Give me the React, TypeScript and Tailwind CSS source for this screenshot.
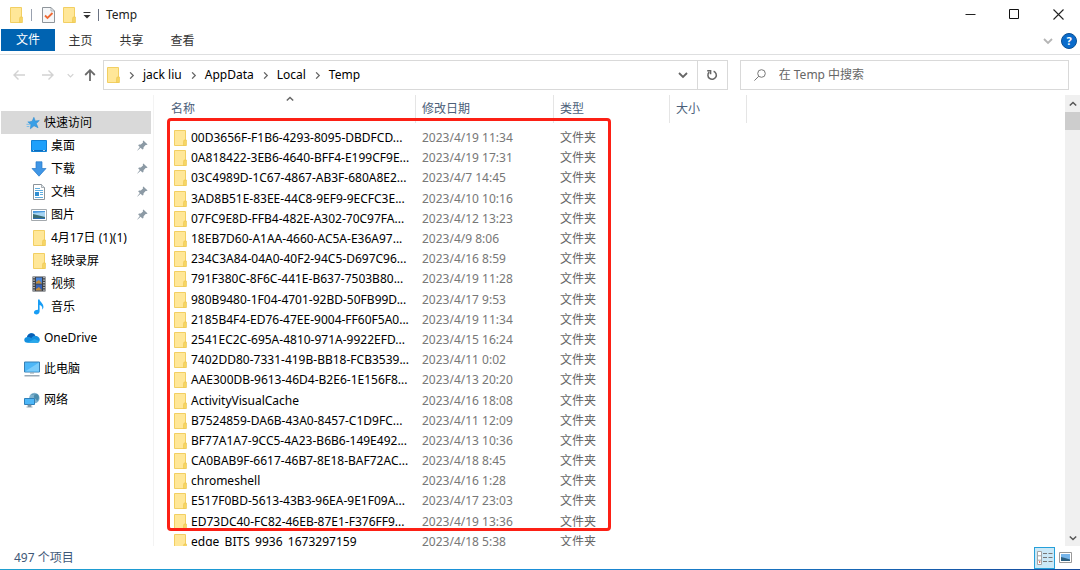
import React from 'react'

const files = [
  { name: '00D3656F-F1B6-4293-8095-DBDFCD...', date: '2023/4/19 11:34' },
  { name: '0A818422-3EB6-4640-BFF4-E199CF9E...', date: '2023/4/19 17:31' },
  { name: '03C4989D-1C67-4867-AB3F-680A8E2...', date: '2023/4/7 14:45' },
  { name: '3AD8B51E-83EE-44C8-9EF9-9ECFC3E...', date: '2023/4/10 10:16' },
  { name: '07FC9E8D-FFB4-482E-A302-70C97FA...', date: '2023/4/12 13:23' },
  { name: '18EB7D60-A1AA-4660-AC5A-E36A97...', date: '2023/4/9 8:06' },
  { name: '234C3A84-04A0-40F2-94C5-D697C96...', date: '2023/4/16 8:59' },
  { name: '791F380C-8F6C-441E-B637-7503B80...', date: '2023/4/19 11:28' },
  { name: '980B9480-1F04-4701-92BD-50FB99D...', date: '2023/4/17 9:53' },
  { name: '2185B4F4-ED76-47EE-9004-FF60F5A0...', date: '2023/4/19 11:34' },
  { name: '2541EC2C-695A-4810-971A-9922EFD...', date: '2023/4/15 16:24' },
  { name: '7402DD80-7331-419B-BB18-FCB3539...', date: '2023/4/11 0:02' },
  { name: 'AAE300DB-9613-46D4-B2E6-1E156F8...', date: '2023/4/13 20:20' },
  { name: 'ActivityVisualCache', date: '2023/4/16 18:08' },
  { name: 'B7524859-DA6B-43A0-8457-C1D9FC...', date: '2023/4/11 12:09' },
  { name: 'BF77A1A7-9CC5-4A23-B6B6-149E492...', date: '2023/4/13 10:36' },
  { name: 'CA0BAB9F-6617-46B7-8E18-BAF72AC...', date: '2023/4/18 8:45' },
  { name: 'chromeshell', date: '2023/4/16 1:28' },
  { name: 'E517F0BD-5613-43B3-96EA-9E1F09A...', date: '2023/4/17 23:03' },
  { name: 'ED73DC40-FC82-46EB-87E1-F376FF9...', date: '2023/4/19 13:36' },
  { name: 'edge_BITS_9936_1673297159', date: '2023/4/18 5:38' },
]

const FolderIcon = () => (
  <svg className="w-[13px] h-4 shrink-0" viewBox="0 0 13 16">
    <path d="M0.5 0.5H11.5V15.5H0.5Z" fill="#ffe798" stroke="#f2cf62" />
    <path d="M10 10H12.5V15.5H9.5V12Z" fill="#f7d564" stroke="#edc64f" strokeWidth="0.6" />
  </svg>
)

const StarIcon = () => (
  <svg className="w-[14px] h-[14px]" viewBox="0 0 16 16">
    <path d="M9 1.5L10.6 5.6L15.2 5.2L11.8 8.6L13.8 13.4L9.2 11.2L5 14.6L5.6 9.8L2.4 7L7 6Z" fill="#3a9fe6" stroke="#2386cf" strokeWidth="0.6" />
    <path d="M0.5 9.5H4.5M0.8 12H3.8M3.5 6.6H1.8" stroke="#64b5ec" strokeWidth="0.9" />
  </svg>
)

const DesktopIcon = () => (
  <svg className="w-4 h-4" viewBox="0 0 16 16">
    <path d="M0.5 2.5H15.5V13.5H0.5Z" fill="#1ea0fb" stroke="#1180d4" />
    <path d="M1 12H15V13H1Z" fill="#0b6cbc" />
    <path d="M2 12.5H3M12 12.5H14" stroke="#fff" strokeWidth="0.7" />
  </svg>
)

const DownloadIcon = () => (
  <svg className="w-4 h-4" viewBox="0 0 16 16">
    <path d="M5 0.8H11V7.5H15L8 15.2L1 7.5H5Z" fill="#3f96e6" stroke="#2678c7" strokeWidth="0.7" />
  </svg>
)

const DocumentIcon = () => (
  <svg className="w-4 h-4" viewBox="0 0 16 16">
    <path d="M2.5 0.5H10.5L13.5 3.5V15.5H2.5Z" fill="#fff" stroke="#8b949b" />
    <path d="M10.5 0.5V3.5H13.5" fill="#dfe5e9" stroke="#8b949b" strokeWidth="0.7" />
    <path d="M4 4.5H9M4 6.5H12M9 8.5H12M9 10.5H12M4 13.5H12" stroke="#5faee0" />
    <path d="M4 8H8V12H4Z" fill="#2f8dd0" />
  </svg>
)

const PictureIcon = () => (
  <svg className="w-4 h-4" viewBox="0 0 16 16">
    <path d="M0.5 2.5H15.5V13.5H0.5Z" fill="#fff" stroke="#a4a9ad" />
    <path d="M2 4H14V12H2Z" fill="#a5d3f2" />
    <path d="M2 7L6 8L14 10V12H2Z" fill="#3b6d73" />
    <path d="M2 4H14V5L8 5.5L2 6Z" fill="#4a98de" />
    <path d="M2 11H14V12H2Z" fill="#2c6cb0" />
  </svg>
)

const VideoIcon = () => (
  <svg className="w-4 h-4" viewBox="0 0 16 16">
    <path d="M1.5 0.5H14.5V15.5H1.5Z" fill="#3d4146" />
    <path d="M3 1V15M13 1V15" stroke="#d9dde0" strokeWidth="1.4" strokeDasharray="1.3 1.2" />
    <path d="M5 1.5H11V7.5H5Z" fill="#4c86d9" />
    <path d="M5 8.5H11V14.5H5Z" fill="#3763b8" />
    <path d="M5 6L8 4L11 7.5H5ZM5 13L8 11L11 14.5H5Z" fill="#c08a3a" />
  </svg>
)

const MusicIcon = () => (
  <svg className="w-4 h-4" viewBox="0 0 16 16">
    <path d="M7 0.5H8.6C8.8 3 13 4.5 12.4 8.6C12.2 9.8 11.6 10.3 11.2 10.6C11.8 8 10.4 6.6 8.6 6V12.5C8.4 15 5.6 16 3.8 15C2 13.8 3.2 10.6 7 10.8Z" fill="#189df5" />
  </svg>
)

const CloudIcon = () => (
  <svg className="w-4 h-4" viewBox="0 0 16 16">
    <path d="M3.4 12.8C-0.6 12.6-0.8 7.6 3 7C3.8 3 9.4 1.8 11.2 5.8C14.6 6 16 8.4 15.8 10C15.6 12 14 12.8 13 12.8Z" fill="#1490df" />
    <path d="M3 7C3.8 3 9.4 1.8 11.2 5.8C9 5.8 8 6.8 7.4 8.2C6 7 4.4 6.8 3 7Z" fill="#0a5fb4" />
    <path d="M3.4 12.8L10.5 9L15.4 11.3C14.9 12.4 14 12.8 13 12.8Z" fill="#28a8ea" />
  </svg>
)

const ComputerIcon = () => (
  <svg className="w-4 h-4" viewBox="0 0 16 16">
    <path d="M0.5 1H15.5V11H0.5Z" fill="#4db7f8" stroke="#3680b5" />
    <path d="M1 10.5L15 1.5V10.5Z" fill="#7accfb" />
    <path d="M6 11.5H10V12.5H6Z" fill="#8fa0ab" />
    <path d="M0.5 14.8H15.5" stroke="#8495a3" strokeWidth="1.2" />
  </svg>
)

const NetworkIcon = () => (
  <svg className="w-4 h-4" viewBox="0 0 16 16">
    <circle cx="10.4" cy="6" r="5.2" fill="#7fb2ce" />
    <path d="M7 3C9 1 11 2 10 4C9 6 12 6 13 9C15 8 16 4 13 2" fill="#4a8bab" />
    <path d="M0.5 6.5H10.5V12.5H0.5Z" fill="#4db7f8" stroke="#2e80ba" />
    <path d="M4 13H7V14.5H4ZM2.5 15H8.5" fill="#7f95a3" stroke="#7f95a3" strokeWidth="0.8" />
  </svg>
)

const PinIcon = () => (
  <svg className="w-[11px] h-[11px]" viewBox="0 0 11 11">
    <path d="M6.4 0.4L10.6 4.4L9.4 5L8.6 4.9L6.6 7.2L6.4 9L5.4 9.6L3.6 7.8L0.6 10.6L0.2 10.4L2.8 7L1.2 5.4L2 4.4L3.8 4.4L6 2.4L5.8 1.2Z" fill="#8c9aa5" />
  </svg>
)

interface ChevronProps {
  className: string
  d?: string
}

const Chevron: React.FC<ChevronProps> = ({ className, d = 'M1 3L5 7L9 3' }) => (
  <svg className={`shrink-0 ${className}`} viewBox="0 0 10 10" fill="none" stroke="currentColor" strokeWidth="1.8">
    <path d={d} />
  </svg>
)

const quickLinks = [
  { label: '桌面', Icon: DesktopIcon, pinned: true },
  { label: '下载', Icon: DownloadIcon, pinned: true },
  { label: '文档', Icon: DocumentIcon, pinned: true },
  { label: '图片', Icon: PictureIcon, pinned: true },
  { label: '4月17日 (1)(1)', Icon: FolderIcon, pinned: false },
  { label: '轻映录屏', Icon: FolderIcon, pinned: false },
  { label: '视频', Icon: VideoIcon, pinned: false },
  { label: '音乐', Icon: MusicIcon, pinned: false },
]

const places = [
  { label: 'OneDrive', Icon: CloudIcon },
  { label: '此电脑', Icon: ComputerIcon },
  { label: '网络', Icon: NetworkIcon },
]

const TitleBar = () => (
  <header className="flex h-[29px] items-center justify-between pl-[10px]">
    <div className="flex items-center">
      <FolderIcon />
      <span className="ml-2 h-3 w-px bg-gray-400" />
      <button aria-label="属性" className="ml-[10px]">
        <svg className="w-[13px] h-4" viewBox="0 0 13 16">
          <path d="M0.5 0.5H9L12.5 4V15.5H0.5Z" fill="#f5f7f9" stroke="#8f959b" />
          <path d="M9 0.5V4H12.5" fill="none" stroke="#8f959b" strokeWidth="0.7" />
          <path d="M3 8.5L5.5 11L10.5 6" fill="none" stroke="#ee6a35" strokeWidth="1.8" />
        </svg>
      </button>
      <button aria-label="新建文件夹" className="ml-2">
        <FolderIcon />
      </button>
      <button aria-label="自定义快速访问工具栏" className="ml-[7px]">
        <svg className="w-2 h-2" viewBox="0 0 8 8">
          <path d="M0.5 1.5H7.5" stroke="#333" />
          <path d="M0.5 4H7.5L4 7.5Z" fill="#333" />
        </svg>
      </button>
      <span className="ml-[7px] h-3 w-px bg-gray-500" />
      <h1 className="ml-[7px]">Temp</h1>
    </div>
    <div className="flex h-full pb-px">
      <button aria-label="最小化" className="flex w-11 items-center justify-center">
        <svg className="w-[11px] h-[11px]" viewBox="0 0 11 11"><path d="M0.5 5.5H10.5" stroke="#222" /></svg>
      </button>
      <button aria-label="最大化" className="flex w-11 items-center justify-center">
        <svg className="w-[11px] h-[11px]" viewBox="0 0 11 11"><path d="M0.5 0.5H9.5V9.5H0.5Z" fill="none" stroke="#111" /></svg>
      </button>
      <button aria-label="关闭" className="flex w-11 items-center justify-center">
        <svg className="w-[11px] h-[11px]" viewBox="0 0 11 11"><path d="M0.5 0.5L10.5 10.5M10.5 0.5L0.5 10.5" stroke="#222" strokeWidth="1.1" /></svg>
      </button>
    </div>
  </header>
)

const Ribbon = () => (
  <nav className="flex h-[26px] items-start justify-between border-b border-[#dedfe0] pl-px pr-[3px]">
    <div className="flex text-[#333]">
      <button className="h-[22px] w-[54px] bg-[#0063b1] text-white">文件</button>
      <button className="h-6 w-[51px]">主页</button>
      <button className="h-6 w-[51px]">共享</button>
      <button className="h-6 w-[51px]">查看</button>
    </div>
    <div className="flex h-6 items-center gap-2">
      <button aria-label="展开功能区" className="text-[#b5b5b5]"><Chevron className="w-[10px] h-[10px]" /></button>
      <button aria-label="帮助" className="flex h-4 w-4 items-center justify-center rounded-full border border-[#0a4f93] bg-[#0a6bcb] text-[11px] font-bold text-white">?</button>
    </div>
  </nav>
)

const AddressBar = () => (
  <div className="flex h-10 items-center pl-[13px] pr-[11px]">
    <button aria-label="后退" className="text-[#d2d2d2]">
      <svg className="w-3 h-3" viewBox="0 0 12 12" fill="none" stroke="currentColor" strokeWidth="1.4"><path d="M12 6H1M5.5 1.5L1 6L5.5 10.5" /></svg>
    </button>
    <button aria-label="前进" className="ml-[17px] text-[#d2d2d2]">
      <svg className="w-3 h-3" viewBox="0 0 12 12" fill="none" stroke="currentColor" strokeWidth="1.4"><path d="M0 6H11M6.5 1.5L11 6L6.5 10.5" /></svg>
    </button>
    <button aria-label="最近浏览的位置" className="ml-[13px] text-[#d2d2d2]"><Chevron className="w-[7px] h-[7px]" /></button>
    <button aria-label="向上" className="ml-[10px] text-[#6b6b6b]">
      <svg className="w-3 h-3" viewBox="0 0 12 12" fill="none" stroke="currentColor" strokeWidth="1.8"><path d="M6 12V1.5M1.2 6L6 1.2L10.8 6" /></svg>
    </button>
    <div className="ml-[7px] flex h-[30px] flex-[619] items-center border border-[#d9d9d9] pl-[3px]">
      <FolderIcon />
      {['jack liu', 'AppData', 'Local', 'Temp'].map((part) => (
        <React.Fragment key={part}>
          <Chevron className="mx-2 w-[7px] h-[7px] text-[#666]" d="M3 0.5L7.5 5L3 9.5" />
          <a href="#" className="text-black">{part}</a>
        </React.Fragment>
      ))}
      <button aria-label="以前的位置" className="ml-auto mr-[9px] text-[#666]"><Chevron className="w-[10px] h-[10px]" /></button>
      <button aria-label="刷新" className="flex h-full w-[30px] items-center justify-center border-l border-[#d9d9d9] text-[#666]">
        <svg className="w-3 h-3" viewBox="0 0 12 12" fill="none" stroke="currentColor" strokeWidth="1.5">
          <path d="M7.6 2.2A4.2 4.2 0 1 1 3.2 3.1M1.2 1.8H4.6V5.2" />
        </svg>
      </button>
    </div>
    <label className="ml-3 flex h-[30px] flex-[314] items-center border border-[#d9d9d9] pl-[13px]">
      <svg className="w-3 h-3 shrink-0" viewBox="0 0 12 12" fill="none" stroke="#777"><circle cx="7.5" cy="4.5" r="3.8" /><path d="M4.8 7.2L0.4 11.6" /></svg>
      <input aria-label="搜索" placeholder="在 Temp 中搜索" className="ml-[13px] w-full min-w-0 outline-none placeholder:text-[#666]" />
    </label>
  </div>
)

const Sidebar = () => (
  <aside className="w-[154px] shrink-0 border-r border-[#f3f3f3] pt-4 text-black">
    <a href="#" className="ml-px mr-[2px] flex h-[23px] items-center bg-[#d9d9d9] pl-[25px]">
      <StarIcon />
      <span className="ml-1">快速访问</span>
    </a>
    <ul>
      {quickLinks.map(({ label, Icon, pinned }) => (
        <li key={label}>
          <a href="#" className="flex h-[23px] items-center pl-[31px] pr-[5px]">
            <span className="flex w-4 justify-center"><Icon /></span>
            <span className="ml-1 flex-1">{label}</span>
            {pinned && <PinIcon />}
          </a>
        </li>
      ))}
    </ul>
    <ul className="pt-1">
      {places.map(({ label, Icon }) => (
        <li key={label}>
          <a href="#" className="flex h-[31px] items-center pl-6">
            <Icon />
            <span className="ml-1">{label}</span>
          </a>
        </li>
      ))}
    </ul>
  </aside>
)

const FileTable = () => (
  <div className="relative h-[451px] min-w-0 flex-1 overflow-hidden pl-[14px]">
    <table className="h-[457px] table-fixed text-left">
      <thead>
        <tr className="h-[33px] align-top text-[#4c607a]">
          <th className="w-[248px] p-0 font-normal">
            <div className="relative flex h-7 items-center border-r border-[#e5e5e5] pl-[3px]">
              名称
              <Chevron className="absolute left-[118px] top-0 w-2 h-2 text-[#666]" d="M1 7L5 3L9 7" />
            </div>
          </th>
          <th className="w-[138px] p-0 font-normal"><div className="flex h-7 items-center border-r border-[#e5e5e5] pl-[6px]">修改日期</div></th>
          <th className="w-[116px] p-0 font-normal"><div className="flex h-7 items-center border-r border-[#e5e5e5] pl-[6px]">类型</div></th>
          <th className="w-[77px] p-0 font-normal"><div className="flex h-7 items-center border-r border-[#e5e5e5] pl-[6px]">大小</div></th>
        </tr>
      </thead>
      <tbody>
        {files.map((file) => (
          <tr key={file.name}>
            <td className="p-0 text-black">
              <div className="flex items-center whitespace-nowrap pl-[6px]">
                <FolderIcon />
                <span className="ml-1">{file.name}</span>
              </div>
            </td>
            <td className="p-0 pl-[6px] text-[#777]">{file.date}</td>
            <td className="p-0 pl-[6px] text-[#666]">文件夹</td>
            <td className="p-0" />
          </tr>
        ))}
      </tbody>
    </table>
    <div className="pointer-events-none absolute left-[13px] top-[23px] h-[413px] w-[444px] rounded-sm border-3 border-[#fc2015]" />
  </div>
)

const Scrollbar = () => (
  <div className="flex w-[15px] shrink-0 flex-col items-center bg-[#f0f0f0] text-[#555]">
    <button aria-label="向上滚动" className="flex h-[17px] items-center"><Chevron className="w-2 h-2" d="M1 7L5 3L9 7" /></button>
    <div className="h-[18px] w-full bg-[#cdcdcd]" />
    <button aria-label="向下滚动" className="mt-auto flex h-4 items-center"><Chevron className="w-2 h-2" /></button>
  </div>
)

const StatusBar = () => (
  <footer>
    <div className="flex h-[23px] items-center justify-between pl-[14px] pr-2 text-[#3e5878]">
      <span>497 个项目</span>
      <div className="flex items-center gap-1">
        <button aria-label="详细信息" className="flex h-[22px] w-[21px] items-center justify-center border border-[#26a0da] bg-[#cbe8f6]">
          <svg className="w-4 h-[14px]" viewBox="0 0 16 14">
            <path d="M0.5 0.5H4.5V13.5H0.5Z" fill="#fff" stroke="#a5a5a5" />
            <path d="M0.5 4.8H4.5M0.5 9.2H4.5" stroke="#a5a5a5" />
            <path d="M2 11H3.3" stroke="#e34b35" strokeWidth="1.5" />
            <path d="M6 2.5H10M11.5 2.5H15.5M6 6.5H10M11.5 6.5H15.5M6 10.5H10M11.5 10.5H15.5" stroke="#777" strokeWidth="1.2" />
          </svg>
        </button>
        <button aria-label="大图标">
          <svg className="w-[13px] h-[11px]" viewBox="0 0 13 11">
            <path d="M0.5 0.5H12.5V10.5H0.5Z" fill="#fff" stroke="#999" />
            <path d="M2 2H11V9H2Z" fill="#77b5ea" />
            <path d="M2 5L6 6L11 7.5V9H2Z" fill="#2c5f80" />
          </svg>
        </button>
      </div>
    </div>
    <div className="h-px bg-linear-to-r from-[#1f9fd0] via-[#1b8fd8] to-[#164a9c]" />
  </footer>
)

export default function App() {
  return (
    <div className="flex min-h-screen flex-col bg-white font-['Noto_Sans','Noto_Sans_CJK_SC',sans-serif] text-[12px] leading-4 text-[#222]">
      <TitleBar />
      <Ribbon />
      <AddressBar />
      <main className="flex flex-1">
        <Sidebar />
        <FileTable />
        <Scrollbar />
      </main>
      <StatusBar />
    </div>
  )
}
